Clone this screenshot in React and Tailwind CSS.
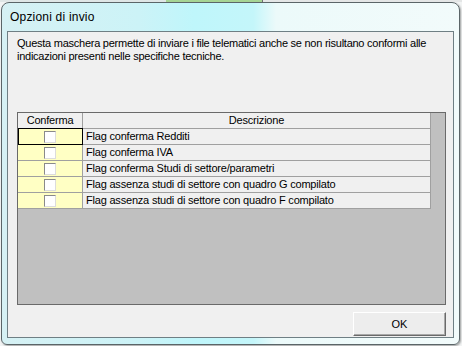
import React from 'react';

const rows = [
    "Flag conferma Redditi",
    "Flag conferma IVA",
    "Flag conferma Studi di settore/parametri",
    "Flag assenza studi di settore con quadro G compilato",
    "Flag assenza studi di settore con quadro F compilato",
];

const Checkbox = () => (
    <div className="w-[12px] h-[12px] bg-white border border-t-[#8a8a8a] border-l-[#8a8a8a] border-r-[#dcdcdc] border-b-[#dcdcdc]" />
);

const App = () => {
    return (
        <div className="w-[462px] h-[346px] bg-[#f2f4f4] overflow-hidden font-['Liberation_Sans',Arial,sans-serif] text-black">
            {/* desktop behind the window */}
            <div className="flex h-[2px]">
                <div className="w-[166px] bg-[#dfe6e6]" />
                <div className="w-[96px] bg-[#a6d494]" />
                <div className="w-[1px] bg-[#6f6f6f]" />
                <div className="flex-1 bg-[#e4e6e6]" />
            </div>

            {/* window frame */}
            <div className="ml-[1px] w-[459px] h-[343px] rounded-t-[8px] rounded-b-[6px] border border-[#5b6568] bg-[linear-gradient(90deg,#d6f1f4_0%,#ccf3f7_30%,#bff6fb_42%,#c4f6fa_55%,#ecfafa_60%,#f2fbfb_100%)] shadow-[1px_1px_2px_rgba(0,0,0,0.35)] flex flex-col">
                <div className="h-[28px] pl-[8px] pt-[7px] text-[12px] leading-[15px] tracking-[0.2px]">
                    Opzioni di invio
                </div>

                {/* client area */}
                <div className="mx-[5px] h-[307px] border border-[#6f7f84] bg-[#f0f0f0] flex flex-col">
                    <div className="pl-[9px] pt-[5px] h-[80px] text-[11px] leading-[13px] tracking-[-0.25px]">
                        <p>Questa maschera permette di inviare i file telematici anche se non risultano conformi alle</p>
                        <p>indicazioni presenti nelle specifiche tecniche.</p>
                    </div>

                    {/* grid */}
                    <div className="ml-[9px] w-[429px] h-[193px] border border-[#6a6a6a] bg-[#c0c0c0] flex text-[11px] leading-[15px] tracking-[-0.2px]">
                        <div className="w-[413px] flex flex-col">
                            <div className="flex h-[16px] bg-[#f0f0f0] border-b border-[#a0a0a0]">
                                <div className="w-[65px] border-r border-[#a0a0a0] text-center">Conferma</div>
                                <div className="w-[348px] border-r border-[#a0a0a0] text-center">Descrizione</div>
                            </div>
                            {rows.map((label, i) => (
                                <div key={label} className="flex h-[16px] border-b border-[#a0a0a0]">
                                    <div className="relative w-[65px] bg-[#ffffc4] border-r border-[#a0a0a0] flex justify-center items-center pr-[1px]">
                                        <Checkbox />
                                        {i === 0 && (
                                            <div className="absolute -top-px left-0 -right-px -bottom-px border border-black" />
                                        )}
                                    </div>
                                    <div className="w-[348px] bg-[#f0f0f0] border-r border-[#a0a0a0] pl-[3px] whitespace-nowrap">
                                        {label}
                                    </div>
                                </div>
                            ))}
                        </div>
                    </div>

                    {/* OK button */}
                    <div className="flex justify-end pr-[7px] mt-[7px]">
                        <button className="w-[93px] h-[24px] bg-[#ededed] border border-t-white border-l-white border-r-[#6a6a6a] border-b-[#6a6a6a] shadow-[inset_-1px_-1px_0_#a8a8a8] text-[11px] font-['Liberation_Sans',Arial,sans-serif]">
                            OK
                        </button>
                    </div>
                </div>
            </div>
        </div>
    );
};

export default App;
